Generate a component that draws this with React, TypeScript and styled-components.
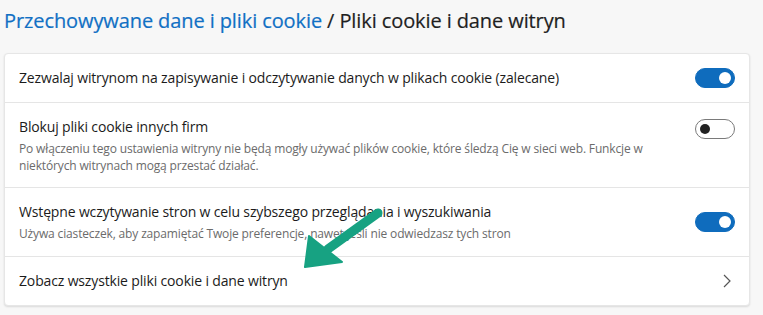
import React from "react";
import styled, { createGlobalStyle } from "styled-components";

const Global = createGlobalStyle`
  html, body { margin: 0; padding: 0; background: #f7f7f7; }
  body { font-family: "Open Sans", "Noto Sans", sans-serif; color: #1b1b1b; }
`;

const Page = styled.div`
  position: relative;
  width: 763px;
  height: 315px;
  padding: 0 13px 0 4px;
  box-sizing: border-box;
  overflow: hidden;
`;

const Heading = styled.h1`
  margin: 0;
  height: 53px;
  display: flex;
  align-items: center;
  padding-bottom: 13px;
  box-sizing: border-box;
  font-size: 20px;
  font-weight: 400;
  letter-spacing: -0.1px;
  color: #1f1f1f;
  -webkit-text-stroke: 0.2px currentColor;
`;

const Crumb = styled.span`
  color: #1170c4;
`;

const Card = styled.section`
  background: #fff;
  border: 1px solid #e6e6e6;
  border-radius: 4px;
  box-shadow: 0 1px 2px rgba(0, 0, 0, 0.12);
`;

const Row = styled.div<{ $h: number; $top?: boolean }>`
  height: ${(p) => p.$h}px;
  box-sizing: border-box;
  display: flex;
  align-items: ${(p) => (p.$top ? "flex-start" : "center")};
  padding: ${(p) => (p.$top ? "14px" : "0")} 14px 0 14px;
  border-top: 1px solid #e5e5e5;
  &:first-child { border-top: none; }
`;

const TextCol = styled.div`
  flex: 1;
  display: flex;
  flex-direction: column;
  gap: 3px;
`;

const Title = styled.div`
  font-size: 14px;
  letter-spacing: -0.15px;
  color: #1b1b1b;
  line-height: 20px;
`;

const Desc = styled.div`
  font-size: 12px;
  letter-spacing: -0.15px;
  color: #6b6b6b;
  line-height: 17px;
  max-width: 650px;
`;

const Toggle = styled.div<{ $on: boolean; $shift?: number }>`
  width: 40px;
  height: 20px;
  box-sizing: border-box;
  border-radius: 10px;
  flex: none;
  position: relative;
  margin-top: ${(p) => p.$shift ?? 0}px;
  background: ${(p) => (p.$on ? "#0f6cbd" : "#fff")};
  border: 1px solid ${(p) => (p.$on ? "#0f6cbd" : "#7a7a7a")};
  &::after {
    content: "";
    position: absolute;
    top: 50%;
    transform: translateY(-50%);
    width: ${(p) => (p.$on ? 12 : 10)}px;
    height: ${(p) => (p.$on ? 12 : 10)}px;
    border-radius: 50%;
    background: ${(p) => (p.$on ? "#fff" : "#222")};
    ${(p) => (p.$on ? "right: 3px;" : "left: 4px;")}
  }
`;

const Chevron = styled.svg`
  flex: none;
  margin-right: 4px;
`;

const ArrowLayer = styled.svg`
  position: absolute;
  left: 0;
  top: 0;
  pointer-events: none;
`;

export default function App() {
  return (
    <>
      <Global />
      <Page>
        <Heading>
          <Crumb>Przechowywane dane i pliki cookie</Crumb>&nbsp;/ Pliki cookie i dane witryn
        </Heading>
        <Card>
          <Row $h={48}>
            <TextCol>
              <Title>Zezwalaj witrynom na zapisywanie i odczytywanie danych w plikach cookie (zalecane)</Title>
            </TextCol>
            <Toggle $on />
          </Row>
          <Row $h={85} $top>
            <TextCol>
              <Title>Blokuj pliki cookie innych firm</Title>
              <Desc>
                Po włączeniu tego ustawienia witryny nie będą mogły używać plików cookie, które śledzą Cię w sieci web. Funkcje w niektórych witrynach mogą przestać działać.
              </Desc>
            </TextCol>
            <Toggle $on={false} $shift={2} />
          </Row>
          <Row $h={69}>
            <TextCol>
              <Title>Wstępne wczytywanie stron w celu szybszego przeglądania i wyszukiwania</Title>
              <Desc>Używa ciasteczek, aby zapamiętać Twoje preferencje, nawet jeśli nie odwiedzasz tych stron</Desc>
            </TextCol>
            <Toggle $on />
          </Row>
          <Row $h={49}>
            <TextCol>
              <Title>Zobacz wszystkie pliki cookie i dane witryn</Title>
            </TextCol>
            <Chevron width="8" height="14" viewBox="0 0 8 14">
              <path d="M1 1 L7 7 L1 13" fill="none" stroke="#555" strokeWidth="1.2" />
            </Chevron>
          </Row>
        </Card>
        <ArrowLayer width="763" height="315" viewBox="0 0 763 315">
          <line x1="378" y1="213" x2="328" y2="249" stroke="#17a282" strokeWidth="9" strokeLinecap="round" />
          <polygon points="305,267 309,236 342,262" fill="#17a282" stroke="#17a282" strokeWidth="2" strokeLinejoin="round" />
        </ArrowLayer>
      </Page>
    </>
  );
}
